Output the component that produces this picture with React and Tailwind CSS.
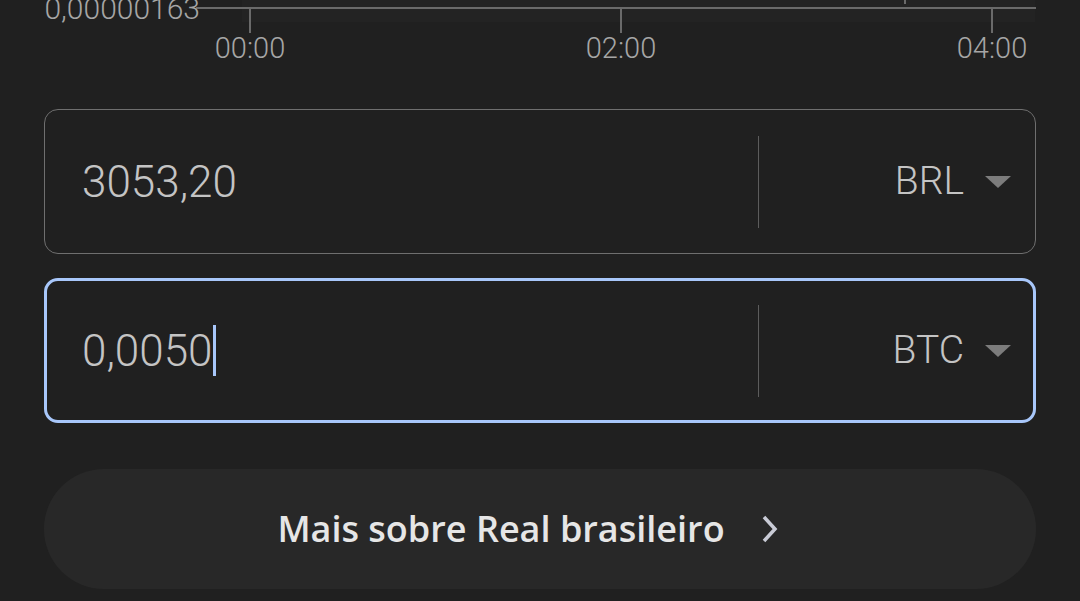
import React from "react";

function Caret() {
  return (
    <svg width="28" height="14" viewBox="0 0 28 14" className="shrink-0">
      <path d="M1 1 L27 1 L14 13 Z" fill="#7c7c7c" />
    </svg>
  );
}

function Field({ value, currency, focused }) {
  return (
    <div
      className={
        "flex items-center h-[145px] rounded-[14px] " +
        (focused ? "border-[3px] border-[#a8c7fa]" : "border-[1.5px] border-[#6f6f6f]")
      }
    >
      <div className={"flex-1 flex items-center " + (focused ? "pl-[35px]" : "pl-[37px]")}>
        <span className="text-[44px] font-light text-[#c4c4c4] leading-none">
          {value}
        </span>
        {focused && <span className="ml-[1px] w-[3px] h-[51px] bg-[#a8c7fa]" />}
      </div>
      <div className="w-[1.5px] h-[92px] bg-[#5c5c5c]" />
      <div className={"flex items-center justify-end gap-[20px] " + (focused ? "w-[274px] pr-[21px]" : "w-[276px] pr-[23px]")}>
        <span className="text-[39px] font-light text-[#c4c4c4] leading-none">
          {currency}
        </span>
        <Caret />
      </div>
    </div>
  );
}

export default function App() {
  return (
    <div className="w-[1080px] h-[601px] bg-[#202020] overflow-hidden" style={{ fontFamily: "Roboto, sans-serif" }}>
      <div className="relative h-[72px]">
        <div className="absolute left-[242px] top-0 w-[793px] h-[22px] bg-[#232323]" />
        <svg className="absolute left-0 top-0" width="1080" height="40">
          <line x1="196" y1="8" x2="1036" y2="8" stroke="#6a6a6a" strokeWidth="2" />
          <line x1="250" y1="8" x2="250" y2="33" stroke="#6a6a6a" strokeWidth="2" />
          <line x1="621" y1="8" x2="621" y2="33" stroke="#6a6a6a" strokeWidth="2" />
          <line x1="992" y1="8" x2="992" y2="33" stroke="#6a6a6a" strokeWidth="2" />
          <line x1="905" y1="0" x2="905" y2="4" stroke="#6a6a6a" strokeWidth="2" />
        </svg>
        <span className="absolute right-[880px] top-[-9px] text-[30px] font-light text-[#a6a6a6] leading-[36px]">
          0,00000163
        </span>
        <span className="absolute left-[250px] -translate-x-1/2 top-[30px] text-[29px] font-light text-[#a6a6a6] leading-[36px]">00:00</span>
        <span className="absolute left-[621px] -translate-x-1/2 top-[30px] text-[29px] font-light text-[#a6a6a6] leading-[36px]">02:00</span>
        <span className="absolute left-[992px] -translate-x-1/2 top-[30px] text-[29px] font-light text-[#a6a6a6] leading-[36px]">04:00</span>
      </div>
      <div className="px-[44px] pt-[37px] flex flex-col">
        <Field value="3053,20" currency="BRL" />
        <div className="h-[24px]" />
        <Field value="0,0050" currency="BTC" focused />
        <div className="mt-[46px] h-[120px] rounded-full bg-[#282828] flex items-center justify-center gap-[35px]">
          <span className="text-[36px] font-semibold text-[#e6e6e6] leading-none" style={{ fontFamily: "'Open Sans', sans-serif" }}>
            Mais sobre Real brasileiro
          </span>
          <svg width="20" height="30" viewBox="0 0 20 30" className="mr-[23px]">
            <path d="M4 3 L15 15 L4 27" fill="none" stroke="#c9cbd6" strokeWidth="3.5" />
          </svg>
        </div>
      </div>
    </div>
  );
}
